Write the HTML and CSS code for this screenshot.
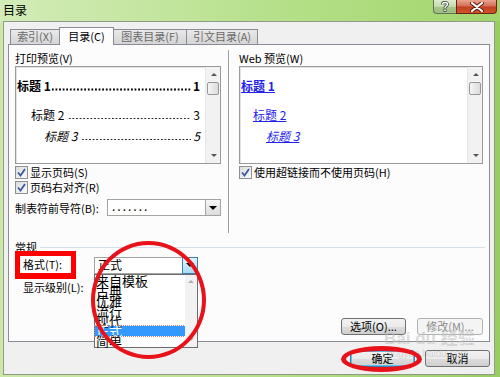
FILE: index.html
```html
<!DOCTYPE html>
<html lang="zh-CN">
<head>
<meta charset="utf-8">
<title>目录</title>
<link rel="stylesheet" href="styles.css">
</head>
<body>
<div class="window">
  <div class="titlebar">
    <span class="title">目录</span>
    <div class="caption-btns">
      <div class="cbtn help"><svg width="10" height="11" viewBox="0 0 10 11"><path d="M2.5 3.5 C2.5 0.8 7.5 0.8 7.5 3.3 C7.5 5 5 5 5 7" fill="none" stroke="#3c4a3a" stroke-width="3"/><path d="M2.5 3.5 C2.5 0.8 7.5 0.8 7.5 3.3 C7.5 5 5 5 5 7" fill="none" stroke="#fff" stroke-width="1.4"/><rect x="3.8" y="8" width="2.4" height="2.4" fill="#fff" stroke="#3c4a3a" stroke-width="0.8"/></svg></div>
      <div class="cbtn close"><svg width="14" height="10" viewBox="0 0 14 10"><path d="M2 1 L12 9 M12 1 L2 9" stroke="#5a1a10" stroke-width="4" stroke-linecap="round"/><path d="M2 1 L12 9 M12 1 L2 9" stroke="#fff" stroke-width="2.2" stroke-linecap="round"/></svg></div>
    </div>
  </div>
  <div class="client">
    <div class="tabs">
      <div class="tab w49">索引(X)</div>
      <div class="tab sel w55">目录(C)</div>
      <div class="tab w72">图表目录(F)</div>
      <div class="tab w72">引文目录(A)</div>
    </div>
    <div class="panel">
      <div class="top">
        <div class="col left">
          <div class="lbl">打印预览(V)</div>
          <div class="preview">
            <div class="pv-body">
              <div class="entry e1"><span>标题 1</span><span class="dots"></span><span>1</span></div>
              <div class="entry e2"><span>标题 2</span><span class="dots"></span><span>3</span></div>
              <div class="entry e3"><span>标题 3</span><span class="dots"></span><span>5</span></div>
            </div>
            <div class="vscroll">
              <span class="arr up"></span>
              <span class="thumb"></span>
              <span class="arr down"></span>
            </div>
          </div>
          <div class="chk"><span class="box"><svg width="11" height="11" viewBox="0 0 11 11"><path d="M2 5.5 L4.5 8.5 L9 2" fill="none" stroke="#3d5a9e" stroke-width="1.8"/></svg></span>显示页码(S)</div>
          <div class="chk"><span class="box"><svg width="11" height="11" viewBox="0 0 11 11"><path d="M2 5.5 L4.5 8.5 L9 2" fill="none" stroke="#3d5a9e" stroke-width="1.8"/></svg></span>页码右对齐(R)</div>
          <div class="leader-row">
            <span class="nowrap">制表符前导符(B):</span>
            <div class="combo leader"><span class="ctext">.......</span><span class="cbtn-dd"><span class="tri"></span></span></div>
          </div>
        </div>
        <div class="divider"></div>
        <div class="col right">
          <div class="lbl">Web 预览(W)</div>
          <div class="preview web">
            <div class="pv-body">
              <div class="wentry w1"><a>标题 1</a></div>
              <div class="wentry w2"><a>标题 2</a></div>
              <div class="wentry w3"><a>标题 3</a></div>
            </div>
            <div class="vscroll">
              <span class="arr up"></span>
              <span class="thumb"></span>
              <span class="arr down"></span>
            </div>
          </div>
          <div class="chk"><span class="box"><svg width="11" height="11" viewBox="0 0 11 11"><path d="M2 5.5 L4.5 8.5 L9 2" fill="none" stroke="#3d5a9e" stroke-width="1.8"/></svg></span>使用超链接而不使用页码(H)</div>
        </div>
      </div>
      <div class="general">
        <div class="grp-head"><span>常规</span><span class="line"></span></div>
        <div class="format-row">
          <span class="flabel">格式(T):</span>
          <div class="combo fmt">
            <span class="ctext">正式</span><span class="cbtn-dd hot"><span class="tri"></span></span>
            <div class="droplist">
              <div class="items">
                <div>来自模板</div>
                <div>古典</div>
                <div>优雅</div>
                <div>流行</div>
                <div>现代</div>
                <div class="selitem">正式</div>
                <div>简单</div>
              </div>
              <div class="lscroll"><span class="la up"></span><span class="la down"></span></div>
            </div>
          </div>
        </div>
        <div class="level-row">显示级别(L):</div>
        <div class="btn-row">
          <div class="btn">选项(O)...</div>
          <div class="btn disabled">修改(M)...</div>
        </div>
      </div>
    </div>
    <div class="footer">
      <div class="btn default w64">确定</div>
      <div class="btn w63">取消</div>
    </div>
  </div>
  <div class="watermark"><span class="wm-big">Bai du 经验</span><span class="wm-small">jingyan.baidu.com</span></div>
  <div class="ring ring-list"></div>
  <div class="ring ring-ok"></div>
</div>
</body>
</html>
```
FILE: styles.css
```css
* { box-sizing: border-box; }
html, body { margin: 0; padding: 0; }
body {
  width: 500px; height: 377px; overflow: hidden;
  font-family: "Noto Sans CJK SC", "Liberation Sans", sans-serif;
  font-size: 11px; color: #000;
  background: linear-gradient(90deg, #cbe8a8 0%, #bfe393 40%, #a9d878 75%, #98cd62 100%);
}
.nowrap { white-space: nowrap; }
.window { position: relative; width: 500px; height: 377px; }
.titlebar {
  height: 21px; display: flex; align-items: flex-start;
  background: linear-gradient(90deg, #d3ecb8 0%, #c4e6a0 30%, #b3df86 60%, #a2d56c 100%);
}
.title { margin: 3px 0 0 3px; font-size: 12px; line-height: 14px; }
.caption-btns { margin-left: auto; margin-right: 3px; display: flex; }
.cbtn { height: 14px; display: flex; align-items: center; justify-content: center; }
.help {
  width: 23px; border: 1px solid #5f7455; border-top: none; border-right: none;
  border-radius: 0 0 0 4px;
  background: linear-gradient(#dfeccf 0%, #c3d9ab 50%, #a5c38a 51%, #9fbf84 100%);
}
.close {
  width: 41px; border: 1px solid #6d2417; border-top: none;
  border-radius: 0 0 4px 0;
  background: linear-gradient(#e9a48f 0%, #d5705a 45%, #c2401f 55%, #d0542c 100%);
}
.client {
  margin-left: 3px; width: 492px; height: 354px;
  background: #f0f0f0; border: 1px solid #8f9a88;
  padding: 5px 4px 0 4px;
}
.tabs { display: flex; align-items: flex-end; height: 17px; padding-left: 2px; }
.tab {
  height: 15px; border: 1px solid #898c95; border-bottom: none; border-right: none;
  background: linear-gradient(#e9e9e9, #d5d5d5);
  color: #6a6a6a; font-size: 11px; line-height: 13px; text-align: center; white-space: nowrap;
}
.tab:last-child { border-right: 1px solid #898c95; }
.tab.sel {
  height: 18px; margin-bottom: -1px; position: relative; z-index: 1;
  background: #fcfcfc; color: #000; border-right: 1px solid #898c95; line-height: 16px;
}
.tab.sel + .tab { border-left: none; }
.w49 { width: 49px; } .w55 { width: 55px; } .w72 { width: 72px; }
.w64 { width: 64px; } .w63 { width: 63px; }
.panel {
  width: 482px; height: 298px; border: 1px solid #898c95;
  background: #fcfcfc; position: relative;
}
.top { display: flex; margin-top: 5px; padding-left: 6px; height: 183px; }
.col { display: flex; flex-direction: column; }
.col.left { width: 206px; }
.col.right { width: 244px; }
.divider { width: 1px; height: 183px; background: #a0a0a0; margin: 0 10px 0 7px; box-shadow: 1px 0 0 #fff; }
.lbl { margin-top: 1px; height: 14px; line-height: 14px; }
.preview {
  margin-top: 1px; height: 98px; display: flex; flex-shrink: 0;
  border: 1px solid #9a9a9a; background: #fff;
  box-shadow: inset 1px 1px 0 #e2e2e2;
}
.pv-body { flex: 1; padding-top: 12px; overflow: hidden; }
.vscroll {
  width: 15px; background: #f2f2f2; border-left: 1px solid #e6e6e6;
  position: relative;
}
.arr { position: absolute; left: 5px; width: 0; height: 0; border-left: 3px solid transparent; border-right: 3px solid transparent; }
.arr.up { top: 6px; border-bottom: 3px solid #555; }
.arr.down { bottom: 6px; border-top: 3px solid #555; }
.thumb {
  position: absolute; left: 1px; top: 15px; width: 12px; height: 13px;
  border: 1px solid #979797; border-radius: 2px;
  background: linear-gradient(90deg, #f4f4f4, #dcdcdc);
}
.entry { display: flex; height: 14px; line-height: 14px; font-size: 12px; padding-right: 5px; white-space: nowrap; }
.entry .dots {
  flex: 1; margin: 0 2px 0 1px;
  background-image: radial-gradient(circle, #222 0.7px, transparent 1.1px);
  background-size: 3.6px 3px; background-repeat: repeat-x; background-position: left 0 bottom 2px;
}
.e1 { padding-left: 1px; font-weight: bold; }
.e1 .dots { margin-left: 0; background-image: radial-gradient(circle, #000 0.9px, transparent 1.3px); }
.e2 { margin-top: 15px; padding-left: 15px; }
.e2 .dots, .e3 .dots { margin-left: 4px; }
.e3 { margin-top: 7px; padding-left: 28px; font-style: italic; }
.wentry { height: 14px; line-height: 14px; font-size: 12px; }
.wentry a { color: #2222ee; text-decoration: underline; }
.w1 { padding-left: 1px; font-weight: bold; }
.w2 { margin-top: 15px; padding-left: 13px; }
.w3 { margin-top: 7px; padding-left: 26px; font-style: italic; }
.chk { display: flex; align-items: center; height: 15px; line-height: 15px; white-space: nowrap; }
.preview + .chk { margin-top: 1px; }
.box {
  width: 13px; height: 13px; margin-right: 2px; flex-shrink: 0;
  border: 1px solid #8e8f8f; background: linear-gradient(135deg, #dcdcdc, #fafafa);
  display: flex; align-items: center; justify-content: center;
}
.leader-row { display: flex; align-items: center; margin-top: 4px; height: 17px; }
.combo {
  height: 17px; border: 1px solid #a3a3a3; background: #fff; flex-shrink: 0;
  display: flex; align-items: stretch; position: relative;
}
.leader { width: 114px; margin-left: auto; margin-right: 0; }
.ctext { flex: 1; padding-left: 3px; line-height: 14px; font-size: 12px; }
.leader .ctext { letter-spacing: 2px; padding-left: 4px; line-height: 12px; }
.cbtn-dd {
  width: 15px; border-left: 1px solid #a6a6a6;
  background: linear-gradient(#f6f6f6, #dcdcdc);
  display: flex; align-items: center; justify-content: center;
}
.cbtn-dd.hot { background: linear-gradient(#e3f4fc, #a9dbf6); border: 1px solid #3c7fb1; margin: -1px -1px -1px 0; width: 16px; }
.tri { width: 0; height: 0; border-left: 4px solid transparent; border-right: 4px solid transparent; border-top: 4px solid #000; }
.general { padding-left: 6px; }
.grp-head { display: flex; align-items: center; height: 10px; line-height: 10px; margin-top: 9px; margin-bottom: -1px; }
.grp-head .line { flex: 1; height: 1px; background: #d5dfe5; margin: 0 4px 0 3px; }
.format-row { display: flex; align-items: center; height: 28px; }
.flabel {
  width: 61px; height: 28px; border: 5px solid #ff0000; border-bottom-width: 6px;
  padding-left: 3px; line-height: 16px; background: #fff; white-space: nowrap;
}
.fmt { width: 104px; margin-left: 18px; }
.droplist {
  position: absolute; left: -1px; top: 16px; width: 104px; height: 74px;
  background: #fff; border: 1px solid #6d6d6d; display: flex; z-index: 3;
}
.items { flex: 1; padding-top: 1px; }
.items div { height: 10px; line-height: 10px; font-size: 13px; padding-left: 1px; white-space: nowrap; }
.items .selitem { background: #3399ff; color: #fff; outline: 1px dotted #b88; }
.lscroll { width: 12px; background: #f2f2f2; position: relative; }
.la { position: absolute; left: 3px; width: 0; height: 0; border-left: 3px solid transparent; border-right: 3px solid transparent; }
.la.up { top: 5px; border-bottom: 3px solid #b0b0b0; }
.la.down { bottom: 6px; border-top: 3px solid #b0b0b0; }
.level-row { height: 16px; line-height: 16px; padding-left: 8px; }
.btn-row { display: flex; justify-content: flex-end; gap: 11px; margin-top: 23px; padding-right: 6px; }
.btn {
  height: 17px; width: 65px; border: 1px solid #707070; border-radius: 3px;
  background: linear-gradient(#f2f2f2 0%, #ebebeb 50%, #dddddd 51%, #cfcfcf 100%);
  display: flex; align-items: center; justify-content: center;
  font-size: 11px; line-height: 15px; white-space: nowrap;
}
.btn.disabled { width: 66px; border-color: #adb2b5; background: #f4f4f4; color: #8a8a8a; }
.btn.default { border-color: #3c7fb1; box-shadow: inset 0 0 0 1px #56c2ee; }
.footer { display: flex; justify-content: flex-end; gap: 10px; margin-top: 8px; }
.watermark {
  position: absolute; left: 384px; top: 330px; z-index: 4;
  display: flex; flex-direction: column; align-items: flex-start;
  color: rgba(190, 190, 190, 0.55); pointer-events: none; white-space: nowrap;
}
.wm-big { font-family: "Liberation Sans", "Noto Sans CJK SC", sans-serif; font-size: 17px; font-weight: bold; line-height: 18px; }
.wm-small { font-family: "Liberation Sans", sans-serif; font-size: 10px; line-height: 12px; margin-left: 4px; }
.ring { position: absolute; border: 4px solid #e8121a; border-radius: 50%; z-index: 5; pointer-events: none; }
.ring-list { left: 91px; top: 241px; width: 115px; height: 118px; }
.ring-ok { left: 341px; top: 346px; width: 81px; height: 26px; border-width: 5px; }
```
